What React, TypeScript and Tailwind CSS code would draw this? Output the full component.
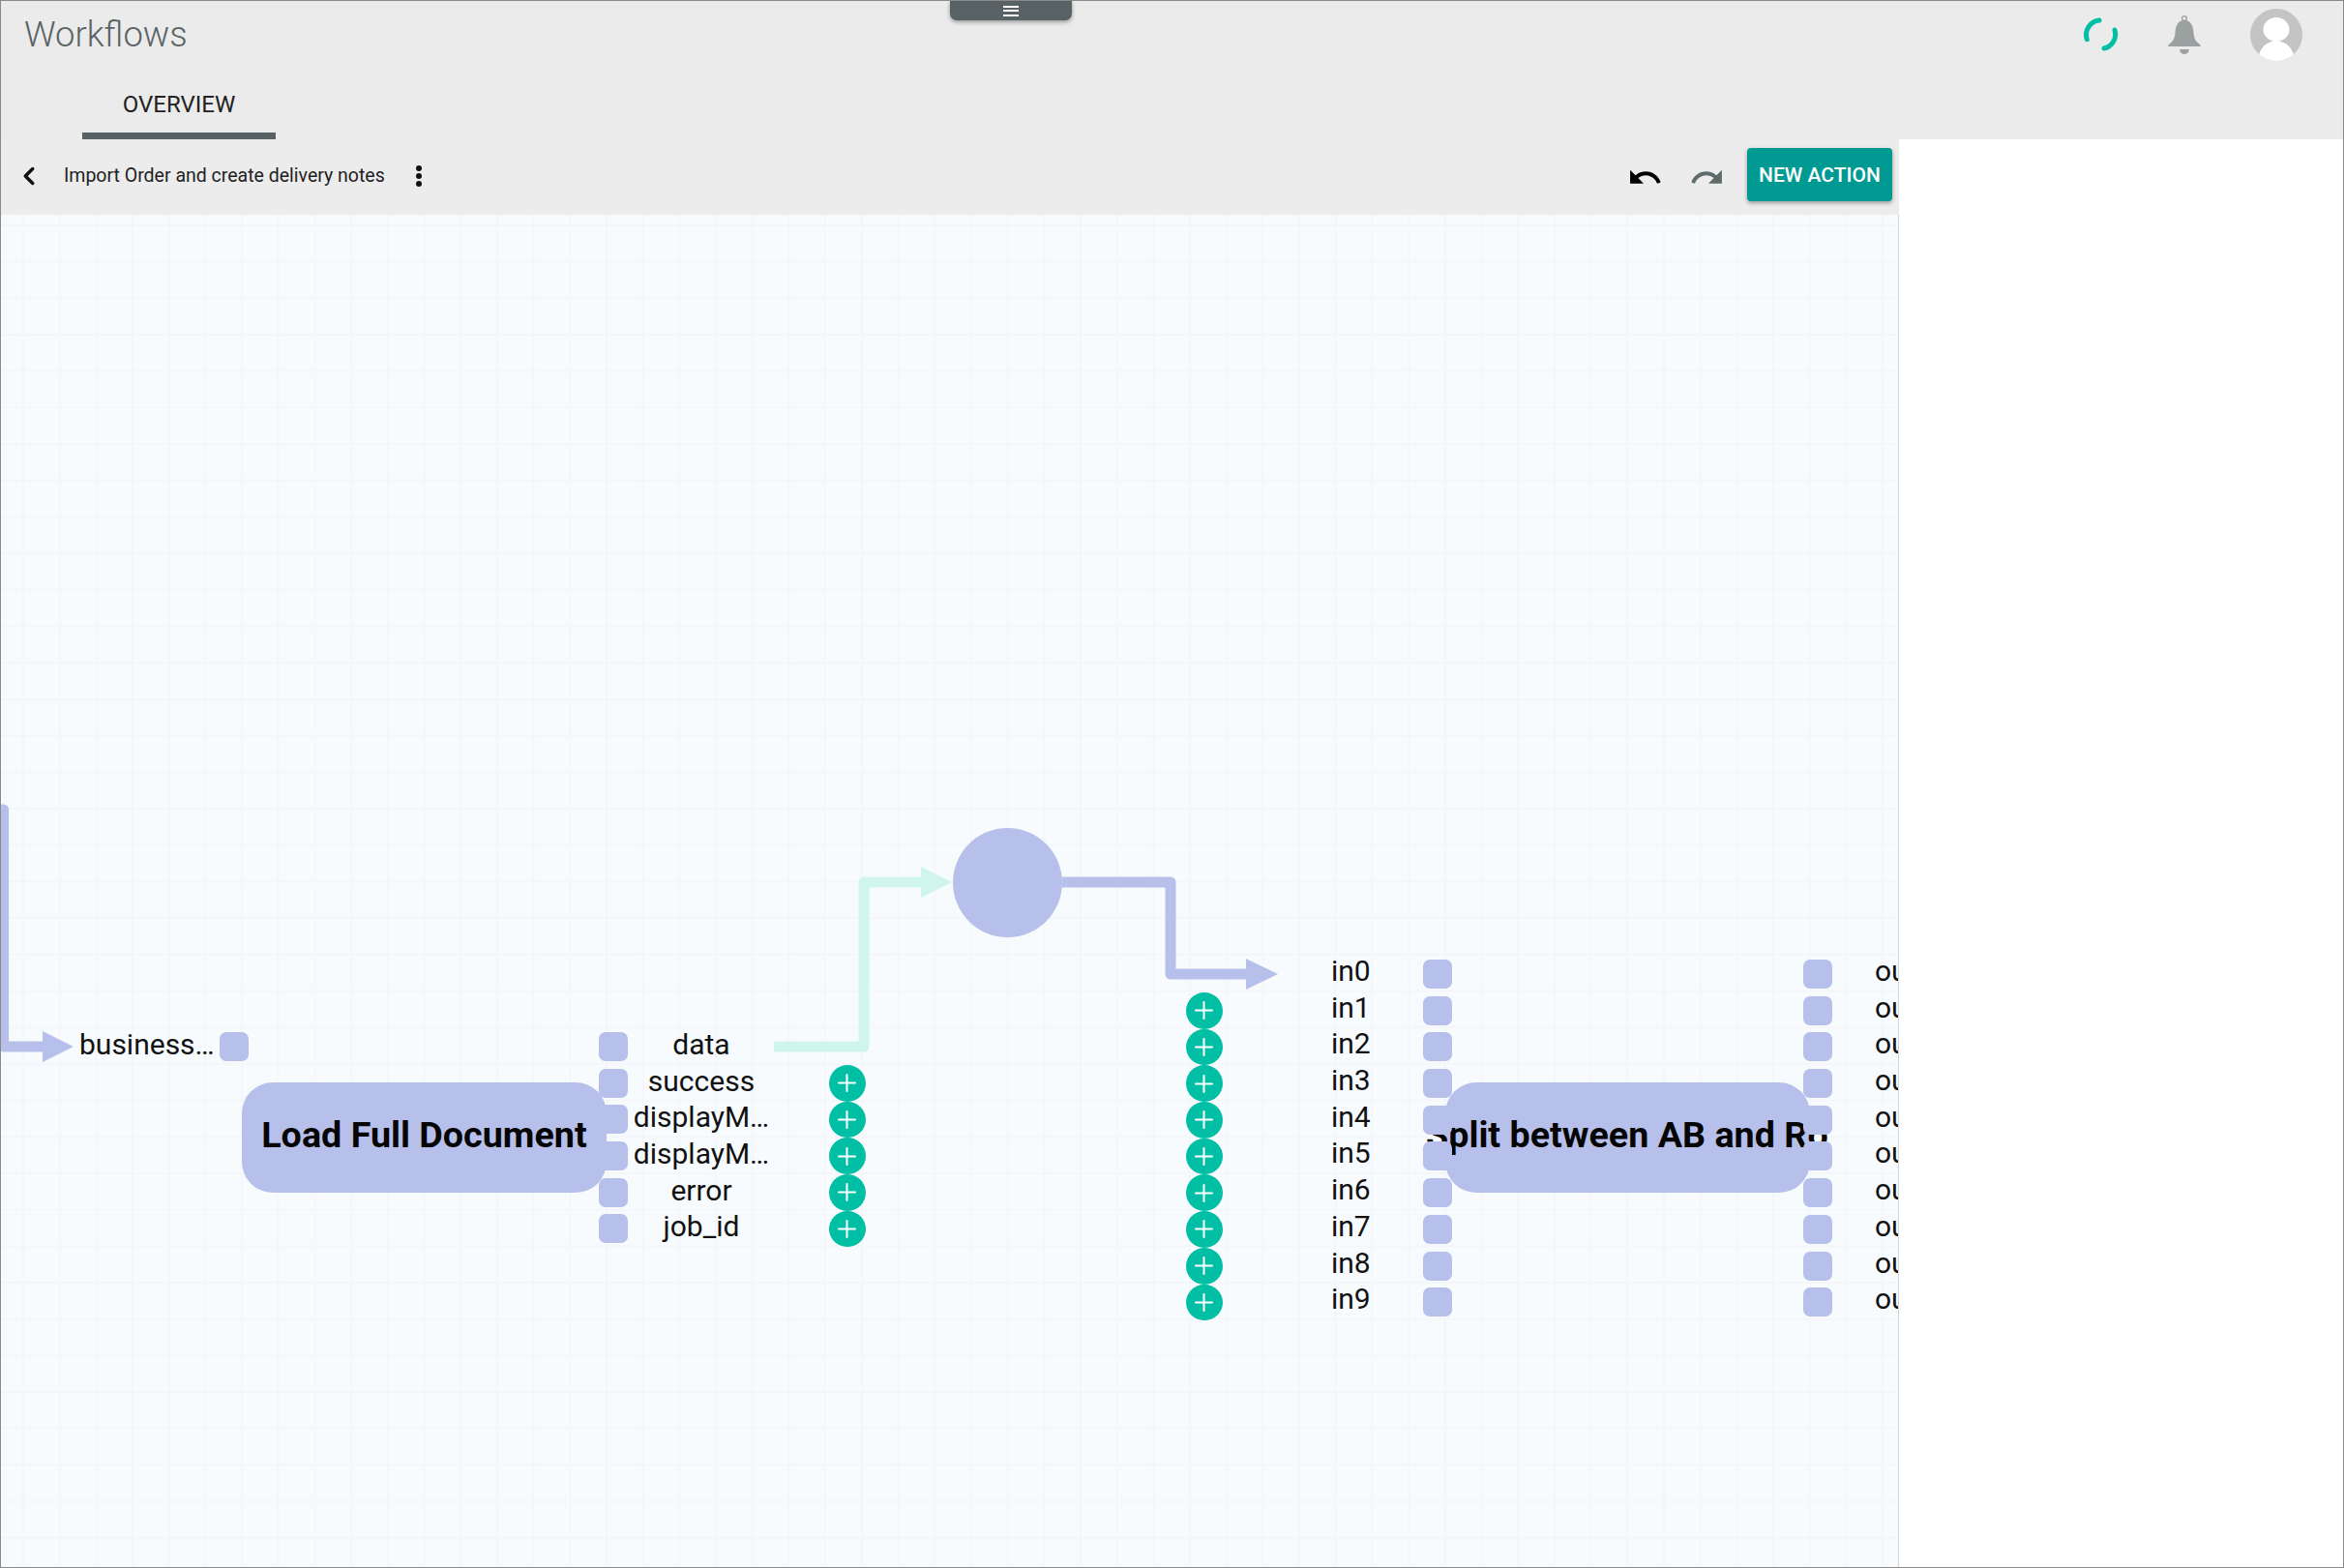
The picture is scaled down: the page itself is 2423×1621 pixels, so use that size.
import { ChevronLeft, Plus } from 'lucide-react'

const outputs = ['data', 'success', 'displayM…', 'displayM…', 'error', 'job_id']
const inputs = ['in0', 'in1', 'in2', 'in3', 'in4', 'in5', 'in6', 'in7', 'in8', 'in9']
const splitOutputs = ['ou', 'ou', 'ou', 'ou', 'ou', 'ou', 'ou', 'ou', 'ou', 'ou']

function Port() {
  return <div className="w-[30px] h-[30px] rounded-[7px] bg-[#b7c0ea]" />
}

function PortColumn({ count, className }: { count: number; className: string }) {
  return (
    <div className={`absolute z-20 flex flex-col gap-[7.7px] ${className}`}>
      {Array.from({ length: count }).map((_, i) => (
        <Port key={i} />
      ))}
    </div>
  )
}

function PlusColumn({ count, className }: { count: number; className: string }) {
  return (
    <div className={`absolute z-20 flex flex-col ${className}`}>
      {Array.from({ length: count }).map((_, i) => (
        <div key={i} className="w-[37.7px] h-[37.7px] rounded-full bg-[#00bfa5] flex items-center justify-center text-white">
          <Plus size={29} strokeWidth={1.7} />
        </div>
      ))}
    </div>
  )
}

function LabelColumn({ labels, className }: { labels: string[]; className: string }) {
  return (
    <div className={`absolute z-20 flex flex-col text-[30px] leading-[37.7px] text-[#111] ${className}`}>
      {labels.map((label, i) => (
        <div key={i} className="h-[37.7px] whitespace-nowrap">
          {label}
        </div>
      ))}
    </div>
  )
}

function Wires() {
  return (
    <svg className="absolute inset-0 z-0" width="1961" height="1398" viewBox="1 222 1961 1398" fill="none">
      {/* incoming from off-canvas */}
      <path d="M-20 837H3.6V1082H48" stroke="#b7c0ea" strokeWidth="11" strokeLinejoin="round" />
      <path d="M44 1066L76 1082L44 1098Z" fill="#b7c0ea" />
      {/* data -> circle */}
      <path d="M800 1082H893V912H956" stroke="#d0f5ec" strokeWidth="11" strokeLinejoin="round" />
      <path d="M952 896L984 912L952 928Z" fill="#d0f5ec" />
      {/* circle -> split */}
      <path d="M1098 912H1210V1007H1292" stroke="#b7c0ea" strokeWidth="11" strokeLinejoin="round" />
      <path d="M1288 991L1321 1007L1288 1023Z" fill="#b7c0ea" />
    </svg>
  )
}

function Spinner() {
  return (
    <svg width="40" height="40" viewBox="0 0 40 40" fill="none" stroke="#00bfa5" strokeWidth="5" strokeLinecap="round">
      <path d="M18 5A15 15 0 0 0 5.3 24.7" />
      <path d="M34 15A15 15 0 0 1 23 34" />
    </svg>
  )
}

function Bell() {
  return (
    <svg width="36" height="42" viewBox="0 0 36 42" fill="#9ba0a0">
      <circle cx="18" cy="4" r="2.4" fill="none" stroke="#9ba0a0" strokeWidth="1.4" />
      <path d="M18 6C11 6 9 12 8.5 19C8 25 6 28 2 31L1 33H35L34 31C30 28 28 25 27.5 19C27 12 25 6 18 6Z" />
      <path d="M13 36H23C22.5 39.5 20.5 41 18 41C15.5 41 13.5 39.5 13 36Z" />
    </svg>
  )
}

function Avatar() {
  return (
    <svg width="54" height="54" viewBox="0 0 54 54">
      <defs>
        <clipPath id="avatar-clip">
          <circle cx="27" cy="27" r="27" />
        </clipPath>
      </defs>
      <g clipPath="url(#avatar-clip)">
        <rect width="54" height="54" fill="#c4c4c4" />
        <ellipse cx="27" cy="21.5" rx="13.5" ry="12.5" fill="#fff" />
        <path d="M7 56C9 42 15 34 27 33C39 34 45 42 47 56Z" fill="#fff" />
      </g>
    </svg>
  )
}

export default function App() {
  return (
    <div className="relative w-[2423px] h-[1621px] overflow-hidden border border-[#8a8a8a] bg-[#ebebeb] flex flex-col font-['Roboto',sans-serif]">
      {/* Drawer handle */}
      <div className="absolute left-[981px] -top-px z-30 w-[126px] h-[21px] rounded-b-[7px] bg-[#586163] shadow-[0_2px_4px_rgba(0,0,0,0.35)] flex flex-col items-center justify-center gap-[2.5px] pt-[1px]">
        <div className="w-[16px] h-[2px] bg-white" />
        <div className="w-[16px] h-[2px] bg-white" />
        <div className="w-[16px] h-[2px] bg-white" />
      </div>

      {/* Header */}
      <header className="h-[143px] flex flex-col justify-between">
        <div className="flex justify-between pl-[24px] pr-[42px] pt-[8px]">
          <h1 className="text-[36.4px] leading-[54px] font-light text-[#5a6366]">Workflows</h1>
          <div className="flex items-center h-[54px]">
            <Spinner />
            <div className="ml-[48px]">
              <Bell />
            </div>
            <div className="ml-[50px]">
              <Avatar />
            </div>
          </div>
        </div>
        <div className="ml-[84px] w-[200px] h-[58px] border-b-[7px] border-[#586163] flex items-center justify-center pb-[7px] text-[24px] text-[#222]">
          OVERVIEW
        </div>
      </header>

      <div className="flex-1 flex min-h-0">
        <div className="w-[1962px] flex flex-col">
          {/* Toolbar */}
          <div className="h-[78px] bg-[#ececec] flex items-center pl-[14px] pr-[7px] pb-[2px]">
            <ChevronLeft size={30} strokeWidth={2.8} className="text-[#111]" />
            <span className="ml-[21px] text-[19.5px] text-[#222]">Import Order and create delivery notes</span>
            <svg className="ml-[31px]" width="8" height="24" viewBox="0 0 8 24" fill="#111">
              <circle cx="4" cy="4" r="3" />
              <circle cx="4" cy="12" r="3" />
              <circle cx="4" cy="20" r="3" />
            </svg>
            <div className="ml-auto flex items-center">
              <svg className="mt-[2px]" width="37" height="37" viewBox="0 0 24 24" fill="#000">
                <path d="M12.5 8c-2.65 0-5.05.99-6.9 2.6L2 7v9h9l-3.62-3.62c1.39-1.16 3.16-1.88 5.12-1.88 3.54 0 6.55 2.31 7.6 5.5l2.37-.78C21.08 11.03 17.15 8 12.5 8z" />
              </svg>
              <svg className="ml-[27px] mt-[2px]" width="37" height="37" viewBox="0 0 24 24" fill="#5f6b6b">
                <path d="M18.4 10.6C16.55 8.99 14.15 8 11.5 8c-4.65 0-8.58 3.03-9.96 7.22L3.9 16c1.05-3.19 4.05-5.5 7.6-5.5 1.95 0 3.73.72 5.12 1.88L13 16h9V7l-3.6 3.6z" />
              </svg>
              <button className="ml-[23px] mb-[3px] w-[150px] h-[55px] pt-[2px] rounded-[4px] bg-[#009a93] text-white text-[21px] font-medium shadow-[0_2px_4px_rgba(0,0,0,0.35)]">
                NEW ACTION
              </button>
            </div>
          </div>

          {/* Canvas */}
          <div className="relative flex-1 overflow-hidden border-r border-[#d4d4d4] bg-[#f8fbfe] bg-[linear-gradient(to_right,#f5f6f9_2px,transparent_2px),linear-gradient(to_bottom,#f5f6f9_2px,transparent_2px)] bg-size-[37.7px_37.7px] bg-position-[22px_10px]">
            <Wires />

            <div className="absolute z-20 left-[81px] top-[839px] text-[30px] leading-[37.7px] text-[#111] whitespace-nowrap">business…</div>
            <div className="absolute z-20 left-[226px] top-[845px]">
              <Port />
            </div>

            {/* Load Full Document */}
            <div className="absolute z-10 left-[249px] top-[897px] w-[377px] h-[114px] rounded-[32px] bg-[#b7c0ea] flex justify-center pt-[32px] text-[37.7px] leading-[44px] font-bold text-[#050505] whitespace-nowrap">
              Load Full Document
            </div>
            <PortColumn count={6} className="left-[618px] top-[845px]" />
            <LabelColumn labels={outputs} className="left-[649px] top-[839px] w-[150px] items-center" />
            <PlusColumn count={5} className="left-[856px] top-[879px]" />

            {/* Circle node */}
            <div className="absolute z-10 left-[984px] top-[634px] w-[113px] h-[113px] rounded-full bg-[#b7c0ea]" />

            {/* Split node: the title runs under the ports, only this much of it shows */}
            <PlusColumn count={9} className="left-[1225px] top-[804px]" />
            <LabelColumn labels={inputs} className="left-[1375px] top-[763px]" />
            <PortColumn count={10} className="left-[1470px] top-[770px]" />
            <div className="absolute z-10 left-[1493px] top-[897px] w-[377px] h-[114px] rounded-[32px] bg-[#b7c0ea]" />
            <div className="absolute z-10 left-[1473px] top-[929px] text-[37.7px] leading-[44px] font-bold text-[#050505] whitespace-nowrap">
              Split between AB and Ro
            </div>
            <PortColumn count={10} className="left-[1863px] top-[770px]" />
            <LabelColumn labels={splitOutputs} className="left-[1937px] top-[763px]" />
          </div>
        </div>
        <div className="flex-1 bg-white" />
      </div>
    </div>
  )
}
